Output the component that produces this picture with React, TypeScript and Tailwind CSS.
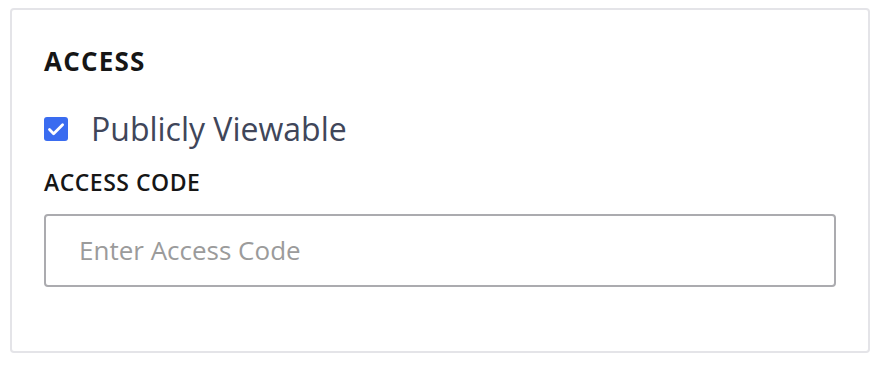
import React from 'react';

const CheckIcon = () => (
  <svg viewBox="0 0 24 24" className="w-[24px] h-[24px] shrink-0" fill="none">
    <rect width="24" height="24" rx="3" fill="#3a6cf0" />
    <path d="M5.5 12.6l4.1 4.1 9-9" stroke="#fff" strokeWidth="2.8" strokeLinecap="round" strokeLinejoin="round" />
  </svg>
);

export default function App() {
  return (
    <div className="w-[882px] h-[366px] bg-white pt-[8px] pl-[10px] font-['Open_Sans',sans-serif]">
      <div className="w-[860px] h-[345px] border-2 border-[#e4e4e8] rounded-[4px] pt-[35px] pl-[32px] pr-[32px]">
        <h2 className="text-[26px] leading-[32px] font-bold text-[#161616] tracking-[1.2px]">ACCESS</h2>

        <label className="mt-[32px] flex items-center h-[40px] gap-[23px]">
          <CheckIcon />
          <span className="text-[32px] leading-[40px] text-[#40465a]">Publicly Viewable</span>
        </label>

        <div className="mt-[18px] text-[23px] leading-[30px] font-semibold text-[#161616] tracking-[0.5px]">ACCESS CODE</div>

        <input
          type="text"
          placeholder="Enter Access Code"
          className="mt-[17px] block w-[792px] h-[73px] border-2 border-[#ababaf] rounded-[4px] pl-[33px] pr-[34px] pb-[2px] text-[26px] text-[#333] placeholder:text-[#9b9b9b] outline-none"
        />
      </div>
    </div>
  );
}
